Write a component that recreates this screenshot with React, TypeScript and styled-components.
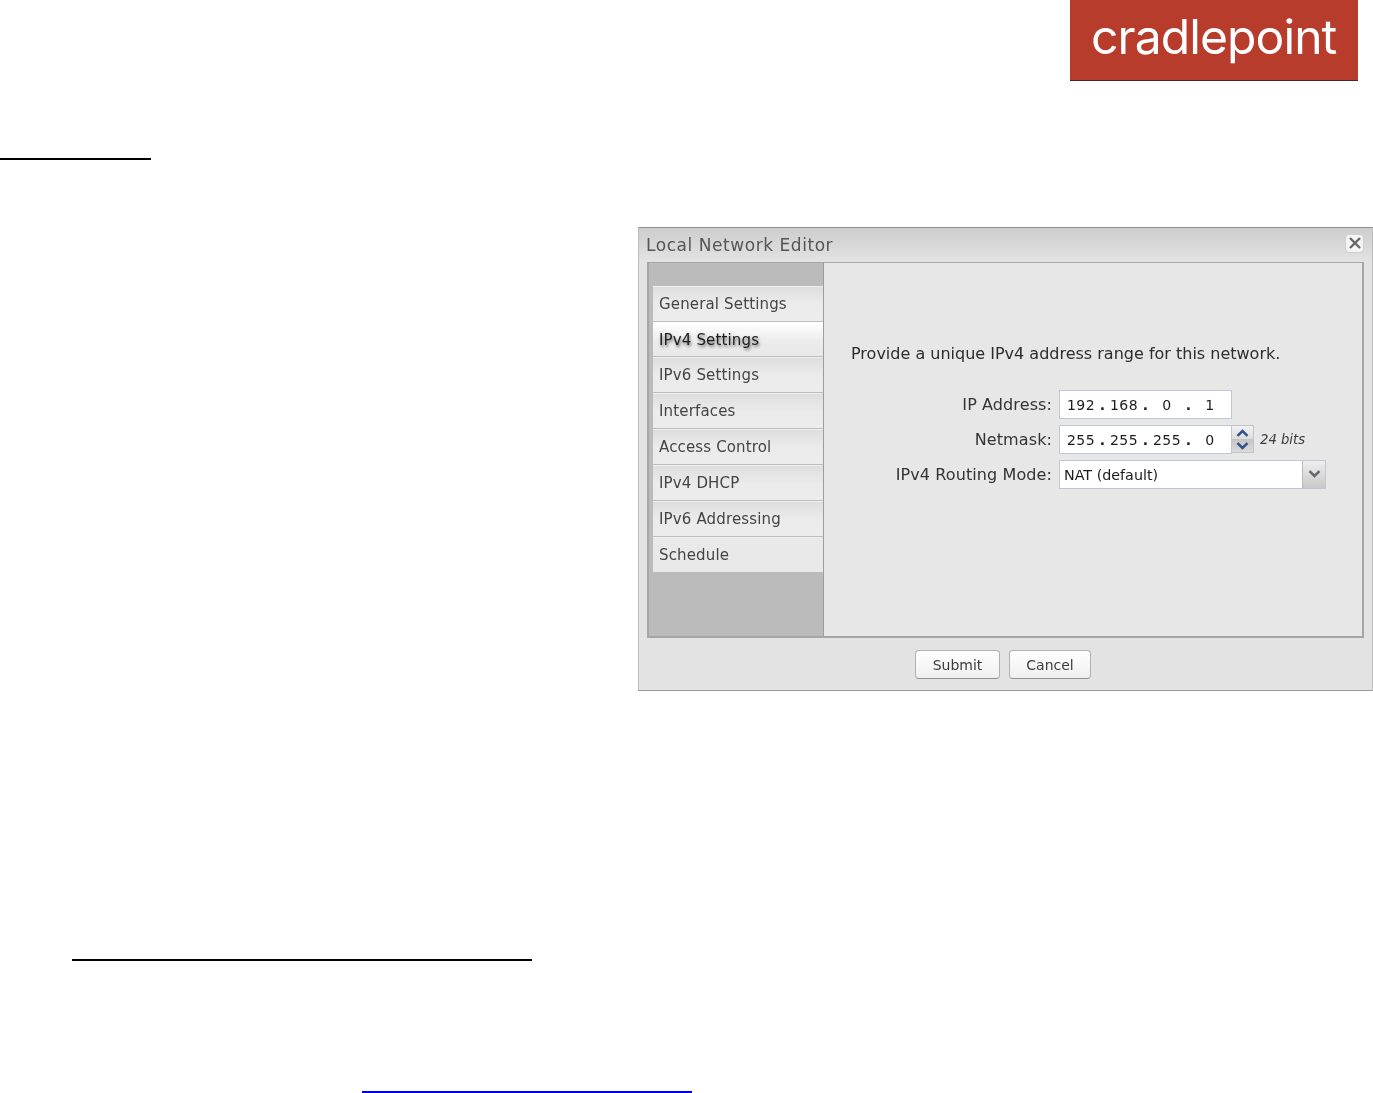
import React from 'react';
import styled, { createGlobalStyle } from 'styled-components';

const GlobalStyle = createGlobalStyle`
  html, body {
    margin: 0;
    padding: 0;
    background: #fff;
  }
  * {
    box-sizing: border-box;
  }
`;

const tabs = [
  'General Settings',
  'IPv4 Settings',
  'IPv6 Settings',
  'Interfaces',
  'Access Control',
  'IPv4 DHCP',
  'IPv6 Addressing',
  'Schedule',
];

function Octets({ values }: { values: string[] }) {
  return (
    <>
      {values.map((value, index) => (
        <React.Fragment key={index}>
          <Octet>{value}</Octet>
          {index < values.length - 1 && <Dot>.</Dot>}
        </React.Fragment>
      ))}
    </>
  );
}

function Chevron({ up, color }: { up?: boolean; color: string }) {
  return (
    <svg width="13" height="8" viewBox="0 0 13 8">
      <path
        d={up ? 'M1.5 6.8 L6.5 2 L11.5 6.8' : 'M1.5 1.2 L6.5 6 L11.5 1.2'}
        fill="none"
        stroke={color}
        strokeWidth="2.5"
      />
    </svg>
  );
}

export default function App() {
  return (
    <Page>
      <GlobalStyle />
      <Header>
        <Logo>cradlepoint</Logo>
      </Header>
      <Rule $left={0} $width={151} $top={77} />

      <DialogRow>
        <Dialog>
          <TitleBar>
            <Title>Local Network Editor</Title>
            <CloseButton>
              <svg width="14" height="14" viewBox="0 0 14 14">
                <path d="M2 2 L12 12 M12 2 L2 12" stroke="#666" strokeWidth="2.4" />
              </svg>
            </CloseButton>
          </TitleBar>

          <Panel>
            <Sidebar>
              {tabs.map((tab) => (
                <Tab key={tab} $active={tab === 'IPv4 Settings'}>
                  {tab}
                </Tab>
              ))}
            </Sidebar>

            <Content>
              <Message>Provide a unique IPv4 address range for this network.</Message>
              <Form>
                <Label>IP Address:</Label>
                <IpField $width={173}>
                  <Octets values={['192', '168', '0', '1']} />
                </IpField>

                <Label>Netmask:</Label>
                <NetmaskRow>
                  <IpField $width={173}>
                    <Octets values={['255', '255', '255', '0']} />
                  </IpField>
                  <Spinner>
                    <SpinHalf>
                      <Chevron up color="#2f5190" />
                    </SpinHalf>
                    <SpinHalf $lower>
                      <Chevron color="#2f5190" />
                    </SpinHalf>
                  </Spinner>
                  <Bits>24 bits</Bits>
                </NetmaskRow>

                <Label>IPv4 Routing Mode:</Label>
                <SelectBox>
                  <SelectValue>NAT (default)</SelectValue>
                  <SelectArrow>
                    <Chevron color="#666" />
                  </SelectArrow>
                </SelectBox>
              </Form>
            </Content>
          </Panel>

          <Footer>
            <Button $width={85}>Submit</Button>
            <Button $width={82}>Cancel</Button>
          </Footer>
        </Dialog>
      </DialogRow>

      <Rule $left={72} $width={460} $top={268} />
      <Rule $left={362} $width={330} $top={130} $color="#0000ee" />
    </Page>
  );
}

const Page = styled.div`
  width: 1373px;
  height: 1093px;
  overflow: hidden;
  background: #fff;
  font-family: 'DejaVu Sans', sans-serif;
`;

const Header = styled.header`
  display: flex;
  justify-content: flex-end;
  padding-right: 15px;
`;

const Logo = styled.div`
  width: 288px;
  height: 81px;
  padding: 5px 0 0 21px;
  background: #b83c2b;
  border-bottom: 1px solid #5a2018;
  color: #fff;
  font-family: 'Inter', sans-serif;
  font-weight: 400;
  font-size: 48px;
  line-height: 64px;
  letter-spacing: -0.9px;
  filter: blur(0.3px);
`;

const Rule = styled.div<{ $left: number; $width: number; $top: number; $color?: string }>`
  width: ${(p) => p.$width}px;
  height: 2px;
  margin-top: ${(p) => p.$top}px;
  margin-left: ${(p) => p.$left}px;
  background: ${(p) => p.$color || '#000'};
`;

const DialogRow = styled.div`
  display: flex;
  justify-content: flex-end;
  margin-top: 67px;
`;

const Dialog = styled.section`
  width: 735px;
  height: 464px;
  padding: 0 8px 0 8px;
  background: #e3e3e3;
  border: 1px solid #bcbcbc;
  border-top-color: #8e8e8e;
  border-bottom-color: #9a9a9a;
  filter: blur(0.35px);
`;

const TitleBar = styled.div`
  display: flex;
  align-items: center;
  justify-content: space-between;
  height: 34px;
  margin: 0 -8px;
  padding: 0 8px 0 7px;
  background: linear-gradient(#cdcdcd, #e3e3e3);
`;

const Title = styled.h1`
  margin: 0;
  color: #555;
  font-size: 17px;
  font-weight: 400;
  letter-spacing: 0.55px;
`;

const CloseButton = styled.div`
  display: flex;
  align-items: center;
  justify-content: center;
  width: 19px;
  height: 19px;
  margin-top: -4px;
  background: #f4f4f4;
  border: 1px solid #cfcfcf;
  border-radius: 4px;
`;

const Panel = styled.div`
  display: flex;
  height: 376px;
  border: 2px solid #a6a6a6;
  border-top-width: 1px;
  background: #e7e7e7;
`;

const Sidebar = styled.nav`
  display: flex;
  flex-direction: column;
  flex: 0 0 175px;
  padding: 23px 0 0 4px;
  background: #bbbbbb;
  border-right: 1px solid #9d9d9d;
`;

const Tab = styled.div<{ $active?: boolean }>`
  display: flex;
  align-items: center;
  height: ${(p) => (p.$active ? 35 : 36)}px;
  padding-left: 6px;
  border-top: 1px solid ${(p) => (p.$active ? '#ffffff' : '#f0f0f0')};
  border-bottom: 1px solid #bdbdbd;
  background: ${(p) =>
    p.$active
      ? 'linear-gradient(#ffffff, #ececec 55%, #e8e8e8)'
      : 'linear-gradient(#dedede, #ebebeb 50%, #ececec)'};
  color: ${(p) => (p.$active ? '#1c1c1c' : '#444')};
  font-size: 15px;
  letter-spacing: 0.15px;
  text-shadow: ${(p) => (p.$active ? '1px 2px 3px rgba(0, 0, 0, 0.55)' : 'none')};

  &:last-child {
    border-bottom: none;
    background: #e9e9e9;
    height: 35px;
  }
`;

const Content = styled.div`
  flex: 1;
  padding: 81px 0 0 27px;
`;

const Message = styled.p`
  margin: 0 0 26px;
  color: #2c2c2c;
  font-size: 16px;
  line-height: 20px;
`;

const Form = styled.div`
  display: grid;
  grid-template-columns: 201px auto;
  grid-auto-rows: 28px;
  row-gap: 7px;
  column-gap: 7px;
  align-items: center;
  justify-content: start;
`;

const Label = styled.div`
  color: #333;
  font-size: 16px;
  letter-spacing: 0.1px;
  text-align: right;
  white-space: nowrap;
`;

const IpField = styled.div<{ $width: number }>`
  display: flex;
  align-items: center;
  width: ${(p) => p.$width}px;
  height: 29px;
  padding: 2px 0 0 3px;
  background: #fff;
  border: 1px solid #c3c6d8;
  color: #1c1c1c;
  font-size: 14px;
  letter-spacing: 0.4px;
`;

const Octet = styled.span`
  flex: 0 0 36px;
  text-align: center;
`;

const Dot = styled.span`
  flex: 0 0 7px;
  text-align: center;
  font-weight: 700;
`;

const NetmaskRow = styled.div`
  display: flex;
  align-items: center;
`;

const Spinner = styled.div`
  display: flex;
  flex-direction: column;
  width: 22px;
  height: 28px;
  border: 1px solid #c0c3d0;
  border-left: none;
`;

const SpinHalf = styled.div<{ $lower?: boolean }>`
  display: flex;
  align-items: center;
  justify-content: center;
  flex: 1;
  background: ${(p) =>
    p.$lower ? 'linear-gradient(#c4c4c4, #dadada)' : 'linear-gradient(#f2f2f2, #dcdcdc)'};
`;

const Bits = styled.span`
  margin-left: 6px;
  color: #3c3c3c;
  font-size: 13.2px;
  font-style: italic;
`;

const SelectBox = styled.div`
  display: flex;
  width: 267px;
  height: 29px;
  background: #fff;
  border: 1px solid #c3c6d8;
`;

const SelectValue = styled.div`
  flex: 1;
  display: flex;
  align-items: center;
  padding: 2px 0 0 4px;
  color: #1c1c1c;
  font-size: 14.3px;
`;

const SelectArrow = styled.div`
  display: flex;
  align-items: center;
  justify-content: center;
  width: 23px;
  background: linear-gradient(#eeeeee, #c8c8c8);
  border-left: 1px solid #b8b8b8;
`;

const Footer = styled.footer`
  display: flex;
  justify-content: center;
  gap: 9px;
  padding: 12px 5px 0 0;
`;

const Button = styled.div<{ $width: number }>`
  display: flex;
  align-items: center;
  justify-content: center;
  width: ${(p) => p.$width}px;
  height: 29px;
  background: linear-gradient(#ffffff, #efefef);
  border: 1px solid #b0b0b0;
  border-bottom-color: #8f8f8f;
  border-radius: 4px;
  color: #3c3c3c;
  font-size: 14px;
`;
